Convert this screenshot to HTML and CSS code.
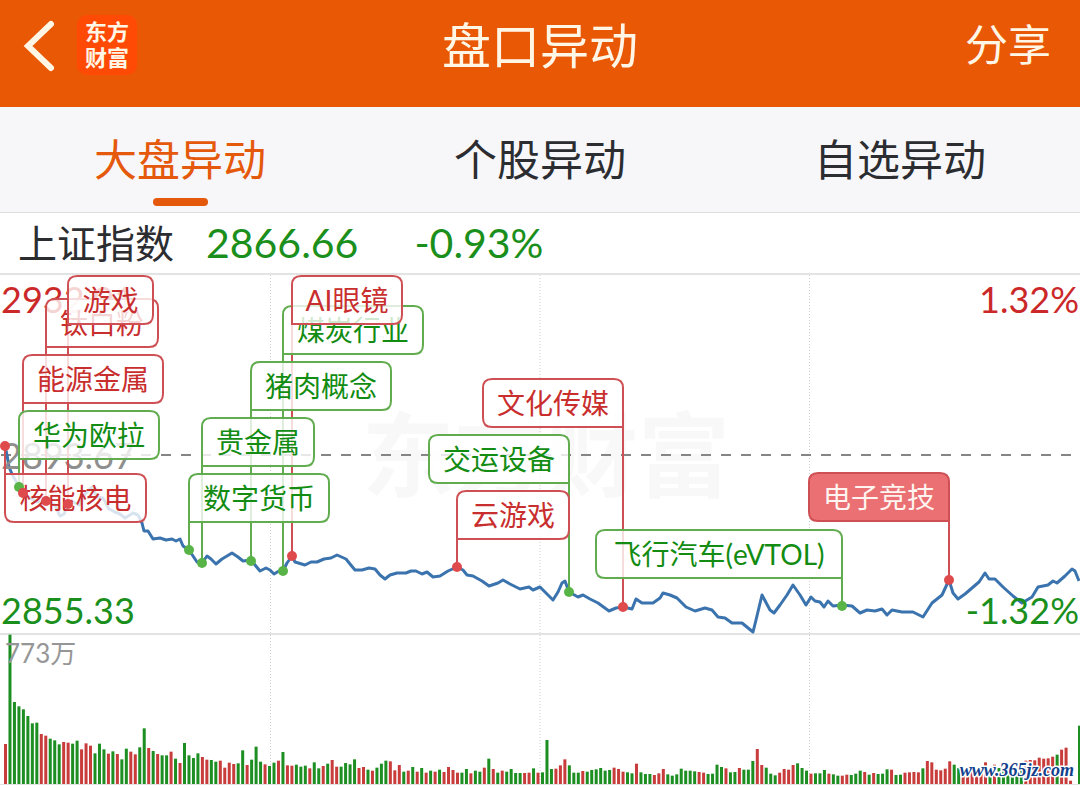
FILE: index.html
```html
<!DOCTYPE html>
<html lang="zh-CN">
  <head>
    <meta charset="utf-8" />
    <meta name="viewport" content="width=device-width, initial-scale=1" />
    <title>盘口异动</title>
    <link rel="stylesheet" href="styles.css">
  </head>
  <body>
    <header class="topbar">
      <div class="topbar-left">
        <button type="button" class="back" aria-label="返回">
          <svg width="27" height="54" viewBox="0 0 27 54">
            <path d="M22 6 L-1 28 L22 50" />
          </svg>
        </button>
        <div class="logo">东方<br />财富</div>
      </div>
      <h1>盘口异动</h1>
      <button type="button" class="share">分享</button>
    </header>

    <nav class="tabs">
      <button type="button" class="tab active">大盘异动</button>
      <button type="button" class="tab">个股异动</button>
      <button type="button" class="tab">自选异动</button>
    </nav>

    <section class="quote">
      <span class="quote-name">上证指数</span>
      <span class="quote-price">2866.66</span>
      <span class="quote-change">-0.93%</span>
    </section>

    <svg class="chart" viewBox="0 0 1080 512">
      <text class="watermark" x="546" y="217">东方财富</text>
      <g class="grid">
        <path class="frame" d="M0 1 H1080 M0 361 H1080 M0 512 H1080" />
        <path class="dotted" d="M270.5 2 V511 M540 2 V511 M809.5 2 V511" />
      </g>
      <g id="volume"></g>
      <path class="middle" d="M1 182 H1072" />
      <polyline id="price" class="price" />
      <g class="axis">
        <text class="up" x="1" y="40">2932.01</text>
        <text class="flat" x="1" y="196">2893.67</text>
        <text class="down" x="1" y="351">2855.33</text>
        <text class="up end" x="1079" y="40">1.32%</text>
        <text class="down end" x="1079" y="351">-1.32%</text>
        <text class="vol" x="5" y="390">773万</text>
      </g>
      <g id="poles"></g>
      <g id="flags"></g>
      <g id="dots"></g>
      <text class="site" x="1074" y="503">www.365jz.com</text>
    </svg>

    <script src="script.js"></script>
  </body>
</html>
```
FILE: styles.css
```css
* {
  box-sizing: border-box;
}

body {
  margin: 0;
  background-color: white;
  color: #2c2d31;
  font-family: Lato, 'Noto Sans CJK SC', sans-serif;
}

button {
  padding: 0;
  border: none;
  background: none;
  color: inherit;
  font-family: inherit;
  cursor: pointer;
}

/* Orange title bar */
.topbar {
  display: grid;
  grid-template-columns: 1fr auto 1fr;
  align-items: center;
  height: 107px;
  padding: 0 29px 18px;
  background-color: #e95804;
  color: #fff6e6;
}

.topbar-left {
  display: flex;
  align-items: center;
  gap: 21px;
}

.back svg {
  display: block;
  overflow: visible;
  fill: none;
  stroke: #fff6e6;
  stroke-width: 6;
  stroke-linecap: round;
}

.logo {
  width: 60px;
  padding: 4px 0;
  border-radius: 10px;
  background-color: #ff4a06;
  font-size: 22px;
  font-weight: 700;
  line-height: 26px;
  text-align: center;
}

.topbar h1 {
  margin: 0;
  font-size: 49px;
  font-weight: 400;
  line-height: 60px;
}

.share {
  justify-self: end;
  font-size: 43px;
  line-height: 60px;
}

/* Tabs */
.tabs {
  display: grid;
  grid-template-columns: repeat(3, 1fr);
  height: 106px;
  border-bottom: 1px solid #dcdde0;
  background-color: #f7f7fa;
}

.tab {
  display: flex;
  flex-direction: column;
  align-items: center;
  padding-top: 23px;
  font-size: 43px;
  line-height: 60px;
}

.tab.active {
  color: #e5590c;
}

.tab.active::after {
  content: '';
  width: 55px;
  height: 8px;
  margin-top: 8px;
  border-radius: 4px;
  background-color: #e5590c;
}

/* Index quote */
.quote {
  display: flex;
  align-items: center;
  height: 60px;
  padding-left: 18px;
  font-size: 39px;
  line-height: 60px;
}

.quote-price,
.quote-change {
  color: #1b8f1b;
  font-size: 41px;
}

.quote-price {
  margin: 0 56px 0 32px;
}

/* Chart */
.chart {
  display: block;
  width: 100%;
  height: auto;
}

.watermark {
  fill: #f8f8f9;
  font-size: 92px;
  font-weight: 700;
  text-anchor: middle;
}

.frame {
  stroke: #e2e4e4;
  stroke-width: 2;
}

.dotted {
  stroke: #cfcfcf;
  stroke-dasharray: 1 2;
}

.middle {
  stroke: #858585;
  stroke-width: 2;
  stroke-dasharray: 10 10;
}

.price {
  fill: none;
  stroke: #3a73ad;
  stroke-width: 3;
  stroke-linejoin: round;
}

.axis {
  font-size: 36px;
}

.axis .up {
  fill: #cb2929;
}

.axis .down {
  fill: #1b8f1b;
}

.axis .flat {
  fill: #8e8e8e;
}

.axis .end {
  text-anchor: end;
}

.axis .vol {
  fill: #969696;
  font-size: 26px;
}

.bar.up {
  fill: #c83c3c;
}

.bar.down {
  fill: #1d8f22;
}

/* Flags on the price line */
.pole {
  fill: none;
  stroke-width: 2;
}

.box {
  fill: white;
  fill-opacity: 0.8;
  stroke-width: 2;
}

.pole.up,
.box.up {
  stroke: #cf5054;
}

.pole.down,
.box.down {
  stroke: #62ac50;
}

.box.solid {
  fill: #ea7073;
  fill-opacity: 1;
}

.dot.up {
  fill: #df4a4c;
}

.dot.down {
  fill: #58b446;
}

.label {
  font-size: 28px;
  text-anchor: middle;
}

.label.up {
  fill: #c92e2e;
}

.label.down {
  fill: #128c12;
}

.label.solid {
  fill: #fff4f0;
}

.site {
  fill: #12408c;
  stroke: white;
  stroke-width: 3;
  stroke-linejoin: round;
  paint-order: stroke;
  font-family: 'Liberation Serif', serif;
  font-size: 18px;
  font-style: italic;
  font-weight: 700;
  text-anchor: end;
}
```
FILE: script.js
```js
var SVG = 'http://www.w3.org/2000/svg';

// x,y pairs of the index line
var price =
  '5,173 7,182 9,194 12,201 19,214 24,221 30,225 37,229 46,228 55,232 60,243 64,241 68,231 73,229 ' +
  '79,232 85,221 92,214 97,224 103,225 109,236 115,239 120,241 125,245 133,240 138,242 142,250 ' +
  '144,258 148,258 153,266 160,265 166,267 172,266 176,268 180,266 183,273 189,277 197,289 202,290 ' +
  '207,283 211,286 216,291 222,286 227,283 232,280 238,284 243,288 251,287 255,292 260,298 266,295 ' +
  '270,297 274,301 279,298 283,298 287,290 292,283 295,289 305,292 311,289 317,289 324,286 331,285 ' +
  '337,282 346,286 350,291 355,297 362,297 369,295 375,296 380,302 385,306 390,302 397,300 406,300 ' +
  '411,298 416,298 422,301 427,299 433,304 440,303 448,298 457,294 463,297 467,302 473,303 482,308 ' +
  '489,313 498,310 503,307 510,311 520,316 529,314 533,317 540,314 547,321 553,327 558,319 562,310 ' +
  '565,308 569,319 578,324 583,322 590,326 598,330 609,338 616,335 623,334 632,336 636,326 642,330 ' +
  '653,330 660,325 663,320 670,322 677,325 686,334 695,338 705,335 712,337 718,344 725,345 732,350 ' +
  '742,350 753,359 756,347 762,322 770,337 774,340 780,332 787,322 793,312 800,322 806,332 811,324 ' +
  '815,328 820,329 824,334 828,328 833,333 842,332 852,333 860,340 867,337 875,338 882,336 887,342 ' +
  '892,337 902,339 913,339 923,344 932,330 942,322 949,307 953,320 958,326 965,321 972,315 979,309 ' +
  '985,300 989,306 995,306 1003,314 1013,323 1022,330 1032,324 1038,314 1048,312 1053,308 1057,310 ' +
  '1065,303 1072,296 1075,298 1079,308';

// one value per minute, negative when the index fell
var volume = [
  120, -448, -246, -233, -224, -204, -182, -184, 150, 145, -136, -131, -119, 126, 124, -121, -130, 104,
  122, 115, -92, -121, -104, 91, -98, 90, -74, -106, 97, 89, -110, -167, 108, -99, 90, -86, -86, 97,
  -76, 63, -123, -86, -78, -92, 81, 73, -72, -67, 70, 49, 64, 60, -62, -101, 57, -73, -112, -67, 59,
  -54, -64, 70, -96, 56, 55, -58, -52, -55, 47, -65, -47, 54, -61, 72, 52, -52, -63, -59, -74, 48, 51,
  -43, 40, -49, -61, -70, 68, 41, 57, -37, 40, -51, 37, -48, 34, -40, 37, -43, 36, 51, 42, 34, -34,
  -45, 32, -40, -37, 49, -76, 45, -34, 40, -37, -45, -33, -33, 33, 34, -47, 34, -35, -132, -45, 46, 56,
  74, -56, -34, -34, 39, -37, -42, -44, -48, -40, -42, 49, 45, 37, -35, -32, 61, -35, -30, -30, 27, 32,
  45, -29, -25, -29, -46, -40, -40, -38, 36, 34, -30, -31, -58, -51, 47, -35, -36, 48, -43, -43, -69,
  105, 57, -49, -31, -26, 34, 45, 43, 57, -62, -48, -40, 31, -32, -32, -42, 31, -29, -25, 25, 28, -27,
  -31, -40, 36, -28, 33, -30, -31, -44, 43, -27, -28, 34, 35, 36, 35, -47, 69, 65, 43, 41, 46, 68, -58,
  -48, 38, 43, 38, 43, 48, 65, -48, 58, -48, -50, -53, -58, -62, -63, 70, 72, 71, 79, 76, 77, 82, -88,
  103, 109, 10, 0, -175
];

// x, y: point on the line; left, top, width: label box
var flags = [
  { text: '核能核电', dir: 'up', x: 5, y: 173, left: 5, top: 201, width: 141 },
  { text: '华为欧拉', dir: 'down', x: 19, y: 214, left: 19, top: 138, width: 140 },
  { text: '能源金属', dir: 'up', x: 23, y: 220, left: 23, top: 82, width: 140 },
  { text: '钛白粉', dir: 'up', x: 46, y: 228, left: 46, top: 26, width: 112 },
  { text: '游戏', dir: 'up', x: 68, y: 231, left: 68, top: 3, width: 85 },
  { text: '数字货币', dir: 'down', x: 189, y: 277, left: 189, top: 201, width: 140 },
  { text: '贵金属', dir: 'down', x: 202, y: 290, left: 202, top: 145, width: 112 },
  { text: '猪肉概念', dir: 'down', x: 251, y: 288, left: 251, top: 89, width: 140 },
  { text: '煤炭行业', dir: 'down', x: 283, y: 298, left: 283, top: 33, width: 140 },
  { text: 'AI眼镜', dir: 'up', x: 292, y: 283, left: 292, top: 3, width: 110 },
  { text: '文化传媒', dir: 'up', x: 623, y: 334, left: 483, top: 106, width: 140 },
  { text: '交运设备', dir: 'down', x: 569, y: 319, left: 429, top: 162, width: 140 },
  { text: '云游戏', dir: 'up', x: 457, y: 294, left: 457, top: 218, width: 112 },
  { text: '飞行汽车(eVTOL)', dir: 'down', x: 842, y: 333, left: 596, top: 257, width: 246 },
  { text: '电子竞技', dir: 'up', x: 949, y: 307, left: 809, top: 200, width: 140, solid: true }
];

var boxHeight = 48;

function add(parent, name, attrs, text) {
  var el = document.createElementNS(SVG, name);
  for (var key in attrs) {
    el.setAttribute(key, attrs[key]);
  }
  if (text) {
    el.textContent = text;
  }
  document.getElementById(parent).appendChild(el);
}

// box with three round corners, the corner at the pole is square
function boxPath(flag) {
  var r = 9;
  var right = flag.x > flag.left;
  var below = flag.y < flag.top;
  var tl = below ? 0 : r;
  var bl = right || below ? r : 0;
  var br = right ? 0 : r;
  var w = flag.width;
  return (
    'M' + (flag.left + tl) + ' ' + flag.top +
    'h' + (w - tl - r) + 'q' + r + ' 0 ' + r + ' ' + r +
    'v' + (boxHeight - r - br) + 'q0 ' + br + ' ' + -br + ' ' + br +
    'h' + -(w - br - bl) + 'q' + -bl + ' 0 ' + -bl + ' ' + -bl +
    'v' + -(boxHeight - bl - tl) + 'q0 ' + -tl + ' ' + tl + ' ' + -tl + 'z'
  );
}

document.getElementById('price').setAttribute('points', price);

volume.forEach(function (value, i) {
  var height = Math.abs(value) / 3;
  add('volume', 'rect', {
    class: 'bar ' + (value > 0 ? 'up' : 'down'),
    x: 4 + (i * 1074) / 240,
    y: 511 - height,
    width: 3,
    height: height
  });
});

flags.forEach(function (flag) {
  var cls = flag.dir + (flag.solid ? ' solid' : '');
  var end = flag.y < flag.top ? flag.top : flag.top + boxHeight;
  add('poles', 'path', { class: 'pole ' + flag.dir, d: 'M' + flag.x + ' ' + flag.y + 'V' + end });
  add('flags', 'path', { class: 'box ' + cls, d: boxPath(flag) });
  add('flags', 'text', { class: 'label ' + cls, x: flag.left + flag.width / 2, y: flag.top + 35 }, flag.text);
  add('dots', 'circle', { class: 'dot ' + flag.dir, cx: flag.x, cy: flag.y, r: 5 });
});
```
